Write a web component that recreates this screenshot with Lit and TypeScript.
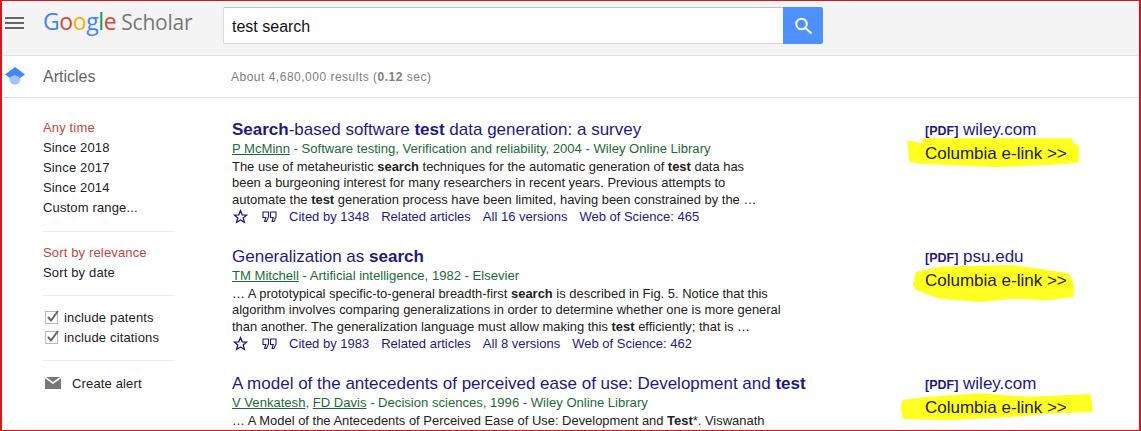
import { LitElement, html, css, svg } from "lit";
import { customElement } from "lit/decorators.js";

interface Res {
  title: unknown; authors: unknown; lines: unknown[]; cited?: string; vers?: string; wos?: string;
  host: string; blob: string;
}

const RESULTS: Res[] = [
  {
    title: html`<b>Search</b>-based software <b>test</b> data generation: a survey`,
    authors: html`<u>P McMinn</u> - Software testing, Verification and reliability, 2004 - Wiley Online Library`,
    lines: [
      html`The use of metaheuristic <b>search</b> techniques for the automatic generation of <b>test</b> data has`,
      html`been a burgeoning interest for many researchers in recent years. Previous attempts to`,
      html`automate the <b>test</b> generation process have been limited, having been constrained by the …`,
    ],
    cited: "Cited by 1348", vers: "All 16 versions", wos: "Web of Science: 465",
    host: "wiley.com",
    blob: "M13.3 6.7L28.3 9.3L29 4.3L176.7 4.3L177 9.3L183 11L182.7 26.7L158 28.7L101.7 31L25 27.7L15 26Z",
  },
  {
    title: html`Generalization as <b>search</b>`,
    authors: html`<u>TM Mitchell</u> - Artificial intelligence, 1982 - Elsevier`,
    lines: [
      html`… A prototypical specific-to-general breadth-first <b>search</b> is described in Fig. 5. Notice that this`,
      html`algorithm involves comparing generalizations in order to determine whether one is more general`,
      html`than another. The generalization language must allow making this <b>test</b> efficiently; that is …`,
    ],
    cited: "Cited by 1983", vers: "All 8 versions", wos: "Web of Science: 462",
    host: "psu.edu",
    blob: "M19 22.3L21.7 10.7L45 5.7L118 4L141.7 7.3L173 12.3L178 22.3L177.7 34L151.7 37.3L118 35.7L85 39L45 35.7L21.7 27.3Z",
  },
  {
    title: html`A model of the antecedents of perceived ease of use: Development and <b>test</b>`,
    authors: html`<u>V Venkatesh</u>, <u>FD Davis</u> - Decision sciences, 1996 - Wiley Online Library`,
    lines: [html`… A Model of the Antecedents of Perceived Ease of Use: Development and <b>Test</b>*. Viswanath`],
    host: "wiley.com",
    blob: "M6.7 17L8.3 12L28.3 9.3L85 5.3L135 8.7L195 6L196.7 22L151.7 23.7L118 27L51.7 30.3L8.3 28.7Z",
  },
];

const star = svg`<path d="M7.5 1.6 L9.2 5.8 L13.7 6.1 L10.2 9 L11.4 13.4 L7.5 11 L3.6 13.4 L4.8 9 L1.3 6.1 L5.8 5.8 Z" fill="none" stroke="#1f1a82" stroke-width="1.3"/>`;
const quote = svg`<path d="M1 3h5.5v5L4.4 12.5H2.6l1.2-4H1z M8.5 3H14v5l-2.1 4.5h-1.8l1.2-4H8.5z" fill="none" stroke="#1f1a82" stroke-width="1.1"/>`;

@customElement("app-root")
export class AppRoot extends LitElement {
  static styles = css`
    :host {
      display: block; width: 1141px; height: 431px; box-sizing: border-box;
      border: solid #d8171b; border-width: 1px 2px 1px 2px; overflow: hidden;
      background: #fff; font-family: "Liberation Sans", Arial, sans-serif; color: #222;
    }
    .top { height: 54px; background: #f4f4f4; border-bottom: 1px solid #e2e2e2; display: flex; align-items: flex-start; }
    .burger { width: 19px; margin: 16px 0 0 3px; display: flex; flex-direction: column; gap: 3px; }
    .burger i { display: block; height: 2px; background: #666; }
    .logo { margin: 4px 0 0 19px; width: 180px; display: flex; align-items: baseline; font-family: "Open Sans", sans-serif; font-size: 23px; font-weight: 500; letter-spacing: -0.4px; }
    .logo .s { color: #777; margin-left: 5px; font-size: 21px; font-weight: 400; letter-spacing: -0.2px; }
    .search { display: flex; height: 37px; margin-top: 6px; }
    .input { width: 560px; box-sizing: border-box; background: #fff; border: 1px solid #d9d9d9; border-top-color: #c0c0c0; border-right: 0; border-radius: 2px 0 0 2px; font-size: 16px; line-height: 37px; padding-left: 8px; color: #111; }
    .btn { width: 40px; background: #4d90fe; border-radius: 0 2px 2px 0; display: flex; align-items: center; justify-content: center; }
    .sub { height: 41px; border-bottom: 1px solid #dcdcdc; display: flex; align-items: center; }
    .cap { width: 38px; margin-left: 3px; flex: none; display: flex; }
    .articles { width: 188px; font-size: 16px; color: #666; }
    .count { font-size: 12px; color: #808080; letter-spacing: 0.5px; }
    .main { display: flex; }
    .side { width: 132px; margin-left: 41px; margin-right: 57px; flex: none; padding-top: 21px; font-size: 13px; color: #222; }
    .side div.i { height: 20px; line-height: 17px; letter-spacing: 0.15px; }
    .red { color: #c4483c; }
    .side hr { border: 0; border-top: 1px solid #ececec; margin: 12px 0; }
    .side hr.b { margin: 11px 0; }
    .side hr.c { margin-top: 13px; }
    .chk { display: flex; align-items: center; gap: 5px; padding-left: 2px; }
    .alert { display: flex; align-items: center; gap: 11px; padding-left: 2px; margin-top: 2px; }
    .results { flex: 1; }
    .r { height: 127px; display: flex; box-sizing: border-box; padding-top: 22px; }
    .body { width: 693px; flex: none; }
    .t { font-size: 17px; line-height: 20px; color: #1f1a82; white-space: nowrap; }
    .a { font-size: 13.08px; line-height: 18px; padding-bottom: 1px; color: #1c6b38; white-space: nowrap; }
    .l { font-size: 12.95px; line-height: 16.3px; color: #222; white-space: nowrap; }
    .acts { display: flex; align-items: center; gap: 12px; font-size: 13px; color: #1f1a82; height: 18px; white-space: nowrap; }
    .acts .st { margin: 0 2px 0 1px; }
    .side-link { padding-top: 1px; }
    .pdf { font-size: 17px; color: #1f1a82; line-height: 18px; white-space: nowrap; }
    .pdf b { font-size: 12.5px; }
    .el { position: relative; margin-top: 5px; font-size: 17px; line-height: 18px; color: #222; white-space: nowrap; }
    .el span { position: relative; }
    .hl { position: absolute; top: -10px; left: -30px; }
    .hl path { fill: #ffff22; stroke: #ffff22; stroke-width: 2; stroke-linejoin: round; }
  `;

  render() {
    return html`
      <div class="top">
        <div class="burger"><i></i><i></i><i></i></div>
        <div class="logo"><span style="color:#4285f4">G</span><span style="color:#db4437">o</span><span style="color:#f4b400">o</span><span style="color:#4285f4">g</span><span style="color:#0f9d58">l</span><span style="color:#db4437">e</span><span class="s">Scholar</span></div>
        <div class="search">
          <div class="input">test search</div>
          <div class="btn"><svg width="20" height="20" viewBox="0 0 20 20"><circle cx="8.5" cy="8" r="5.3" fill="none" stroke="#fff" stroke-width="2"/><path d="M12.5 12L18.5 17.5" stroke="#fff" stroke-width="2"/></svg></div>
        </div>
      </div>
      <div class="sub">
        <div class="cap"><svg width="20" height="20" viewBox="0 0 20 20"><circle cx="10" cy="12" r="5.5" fill="#a1c2fa"/><path d="M0 7.5L10 0l10 7.5-5 3.4a6 6 0 0 0-10 0z" fill="#4285f4"/></svg></div>
        <div class="articles">Articles</div>
        <div class="count">About 4,680,000 results (<b>0.12</b> sec)</div>
      </div>
      <div class="main">
        <div class="side">
          <div class="i red">Any time</div><div class="i">Since 2018</div><div class="i">Since 2017</div><div class="i">Since 2014</div><div class="i">Custom range...</div>
          <hr />
          <div class="i red">Sort by relevance</div><div class="i">Sort by date</div>
          <hr class="b" />
          <div class="i chk">${this.check()}include patents</div><div class="i chk">${this.check()}include citations</div>
          <hr class="c" />
          <div class="i alert"><svg width="16" height="12" viewBox="0 0 16 12"><path d="M0 1.2V12h16V1.2L8 7z M1 0l7 5 7-5z" fill="#777"/></svg>Create alert</div>
        </div>
        <div class="results">
          ${RESULTS.map((r) => html`
            <div class="r">
              <div class="body">
                <div class="t">${r.title}</div>
                <div class="a">${r.authors}</div>
                ${r.lines.map((l) => html`<div class="l">${l}</div>`)}
                ${r.cited ? html`<div class="acts">
                  <svg class="st" width="15" height="15" viewBox="0 0 15 15">${star}</svg>
                  <svg width="15" height="15" viewBox="0 0 15 15">${quote}</svg>
                  <span>${r.cited}</span><span>Related articles</span><span>${r.vers}</span><span>${r.wos}</span>
                </div>` : ""}
              </div>
              <div class="side-link">
                <div class="pdf"><b>[PDF]</b> ${r.host}</div>
                <div class="el">
                  <svg class="hl" width="215" height="45" viewBox="0 0 215 45"><path d="${r.blob}" /></svg>
                  <span>Columbia e-link &gt;&gt;</span>
                </div>
              </div>
            </div>`)}
        </div>
      </div>`;
  }

  check() {
    return html`<svg width="14" height="14" viewBox="0 0 14 14"><rect x="0.5" y="1.5" width="12" height="12" fill="#fff" stroke="#bbb"/><path d="M3 7l3 3.5L13 1" fill="none" stroke="#666" stroke-width="2"/></svg>`;
  }
}
